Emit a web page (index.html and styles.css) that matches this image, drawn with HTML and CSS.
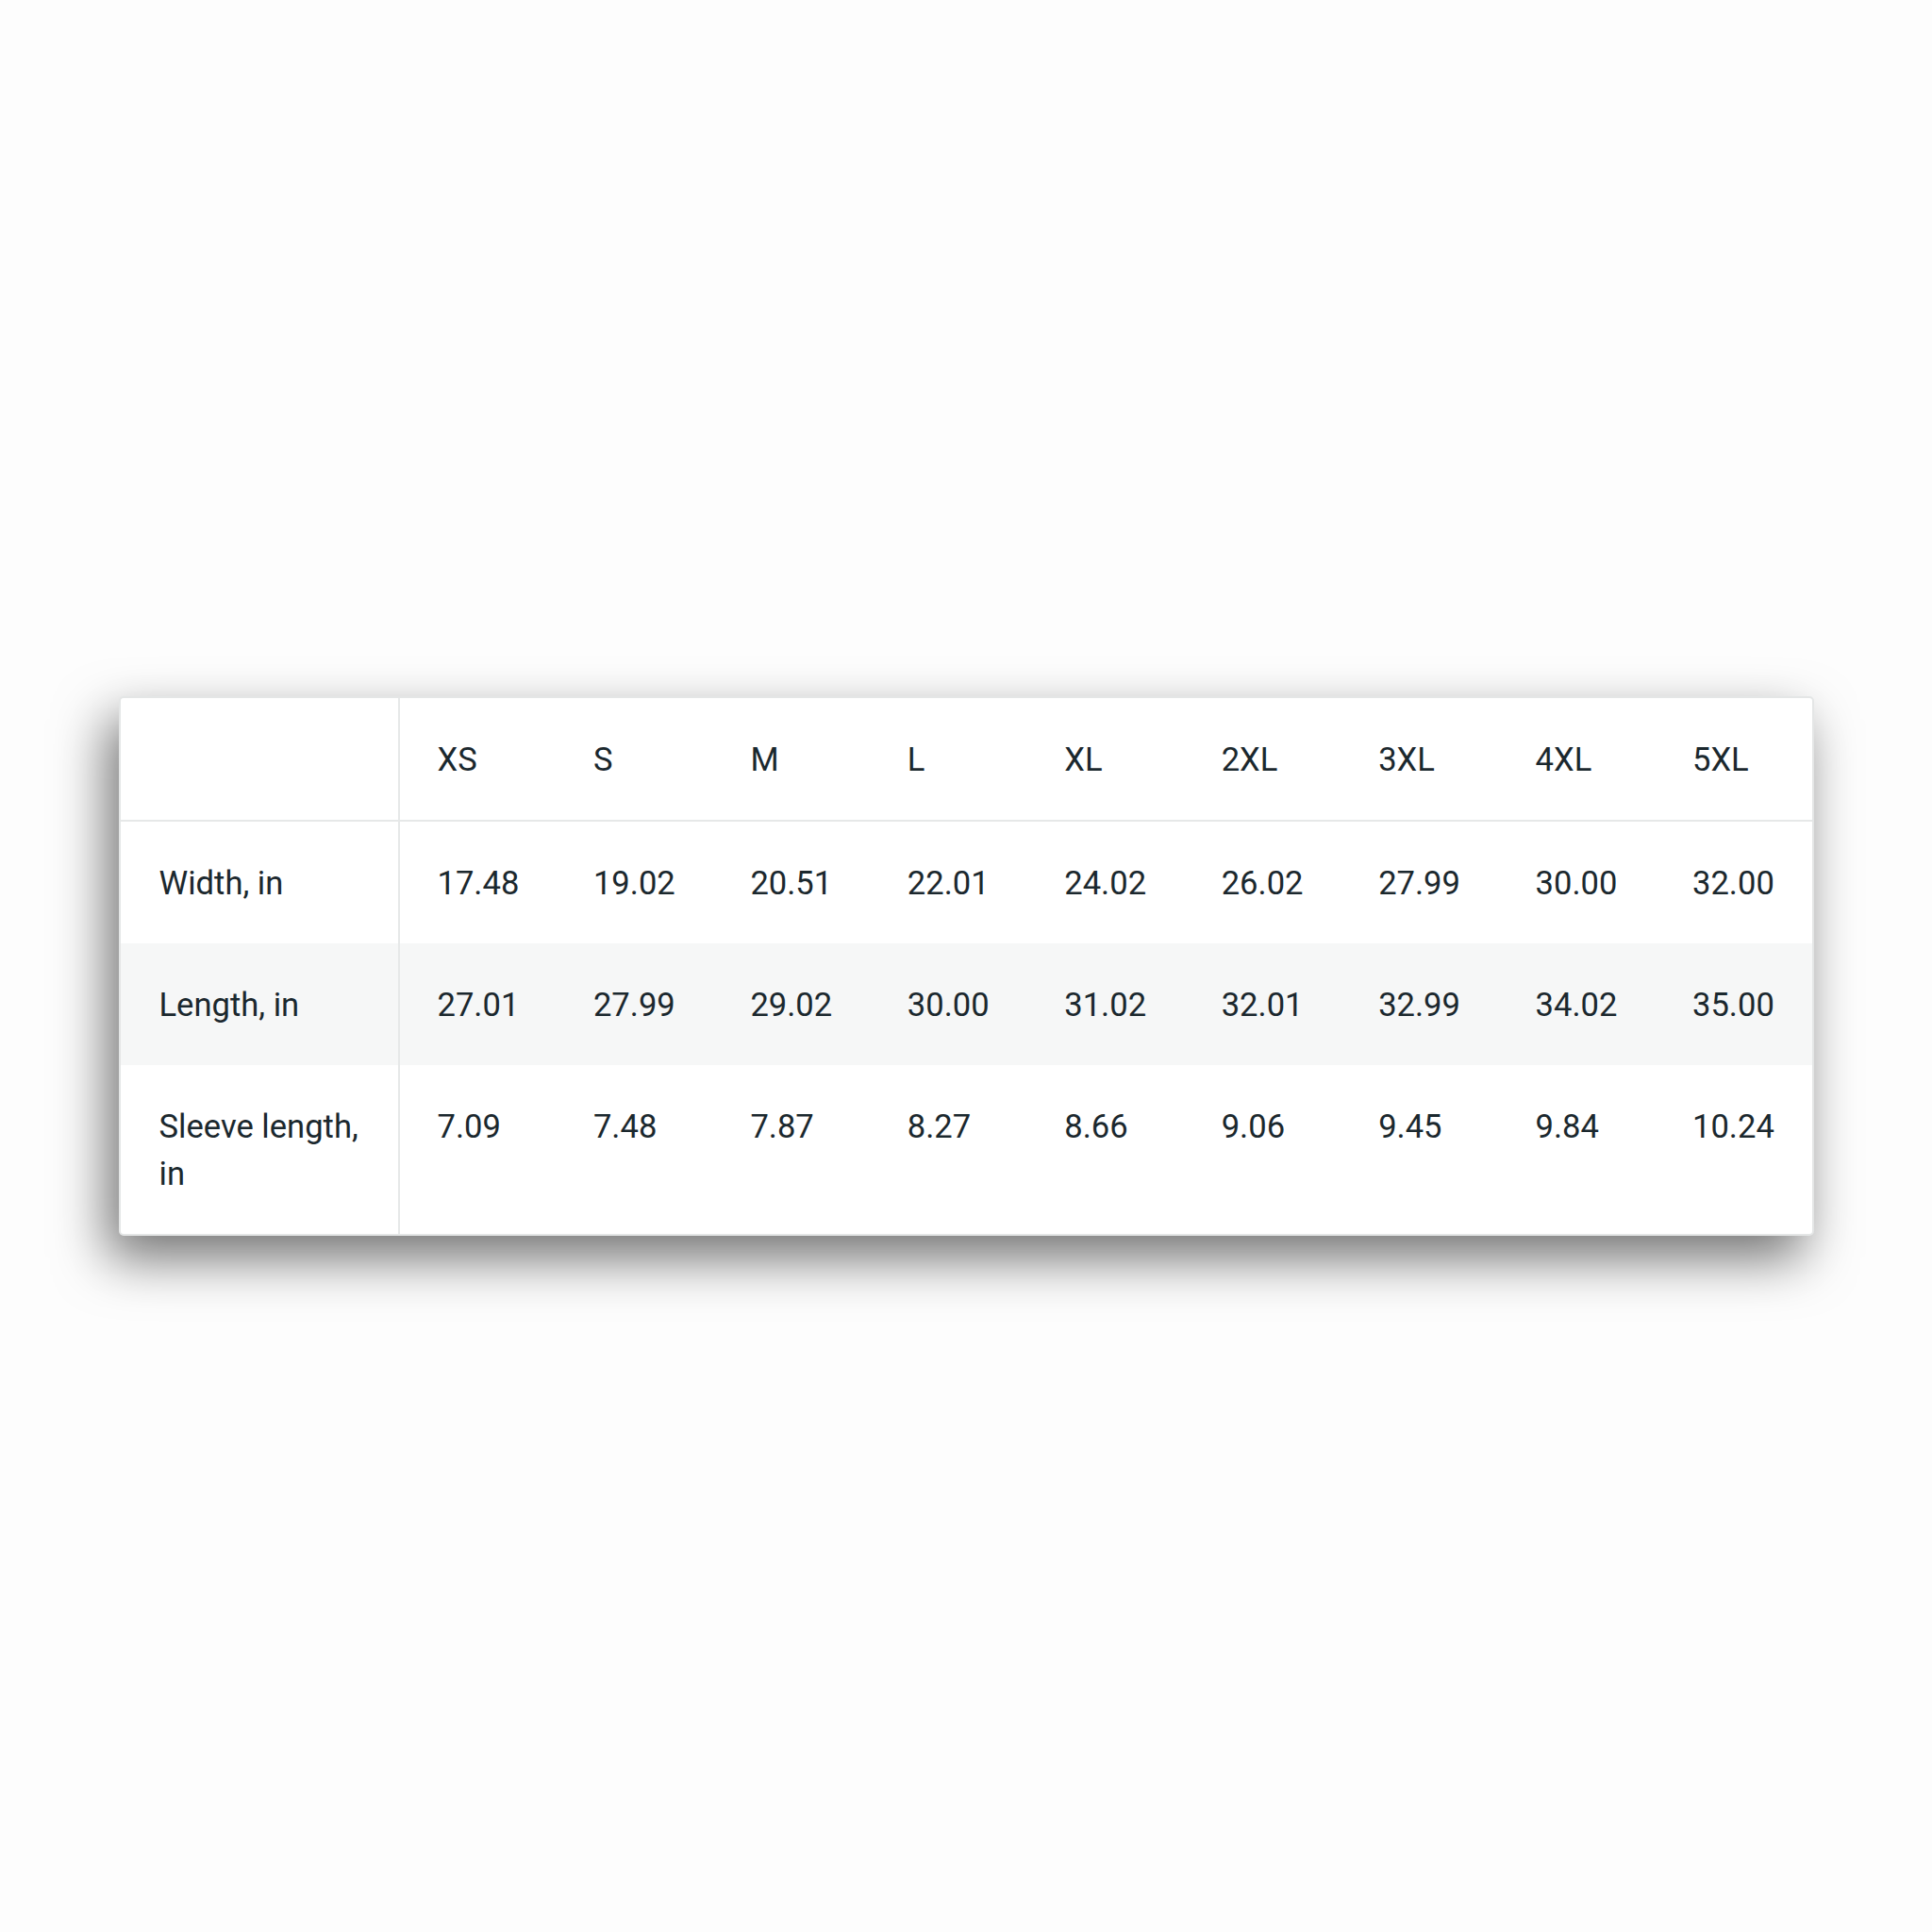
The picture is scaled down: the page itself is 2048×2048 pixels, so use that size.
FILE: index.html
```html
<!DOCTYPE html>
<html lang="en">
<head>
<meta charset="utf-8">
<title>Size chart</title>
<link rel="stylesheet" href="styles.css">
</head>
<body>
<main class="page">
  <div class="card">
    <table class="sizes">
      <colgroup><col class="label-col"><col><col><col><col><col><col><col><col><col></colgroup>
      <thead>
        <tr class="head-row">
          <th class="label"></th>
          <th>XS</th><th>S</th><th>M</th><th>L</th><th>XL</th><th>2XL</th><th>3XL</th><th>4XL</th><th>5XL</th>
        </tr>
      </thead>
      <tbody>
        <tr>
          <td class="label">Width, in</td>
          <td>17.48</td><td>19.02</td><td>20.51</td><td>22.01</td><td>24.02</td><td>26.02</td><td>27.99</td><td>30.00</td><td>32.00</td>
        </tr>
        <tr class="alt">
          <td class="label">Length, in</td>
          <td>27.01</td><td>27.99</td><td>29.02</td><td>30.00</td><td>31.02</td><td>32.01</td><td>32.99</td><td>34.02</td><td>35.00</td>
        </tr>
        <tr>
          <td class="label">Sleeve length, in</td>
          <td>7.09</td><td>7.48</td><td>7.87</td><td>8.27</td><td>8.66</td><td>9.06</td><td>9.45</td><td>9.84</td><td>10.24</td>
        </tr>
      </tbody>
    </table>
  </div>
</main>
</body>
</html>
```

FILE: styles.css
```css
html, body {
  margin: 0;
  padding: 0;
  background: #fdfdfd;
}

.page {
  width: 2048px;
  height: 2048px;
  display: flex;
  align-items: center;
  justify-content: center;
}

.card {
  box-sizing: border-box;
  width: 1797px;
  background: #ffffff;
  border: 2px solid #e4e6e6;
  border-radius: 5px;
  overflow: hidden;
  box-shadow: -12px 24px 55px rgba(0, 0, 0, 0.55);
}

.sizes {
  width: 100%;
  border-collapse: collapse;
  table-layout: fixed;
  font-family: Roboto, "Noto Sans", sans-serif;
  font-size: 34.6px;
  line-height: 50px;
  color: #1b282e;
}

.label-col {
  width: 295px;
}

.sizes th,
.sizes td {
  text-align: left;
  font-weight: 400;
  padding: 40px 16px 39px 40px;
  vertical-align: top;
}

.sizes .label {
  border-right: 2px solid #e6e8e8;
  padding-left: 41px;
}

.head-row th {
  border-bottom: 2px solid #e6e8e8;
}

.alt td {
  background: #f6f7f7;
}
```
